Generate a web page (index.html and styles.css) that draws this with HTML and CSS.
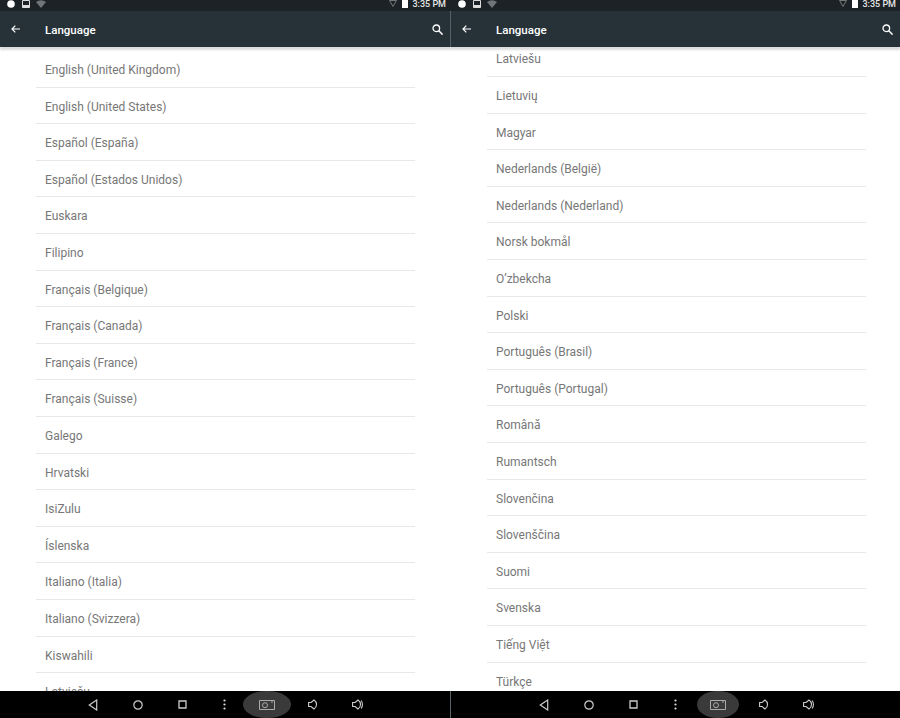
FILE: index.html
```html
<!DOCTYPE html>
<html lang="en">
<head>
    <meta charset="UTF-8">
    <meta name="viewport" content="width=device-width, initial-scale=1.0">
    <title>Language</title>
    <link rel="stylesheet" href="styles.css">
</head>
<body>

<div class="screens">

    <!-- Left screen -->
    <div class="screen screen-left">
        <div class="status-bar">
            <div class="status-left">
                <svg width="8" height="8" viewBox="0 0 8 8"><circle cx="4" cy="4" r="3.800" fill="#fff"/></svg>
                <svg class="status-gap" width="8" height="8" viewBox="0 0 8 8"><path d="M.5.500h7v7h-7z" fill="none" stroke="#ddd"/><path d="M.5 5h7v2.500h-7z" fill="#ddd"/></svg>
                <svg width="10" height="8" viewBox="0 0 10 8"><path d="M0 2Q5-1.500 10 2L5 8z" fill="#6f7678"/></svg>
            </div>
            <div class="status-right">
                <svg width="8" height="7" viewBox="0 0 8 7"><path d="M.5.500h7L4 6.500z" fill="none" stroke="#777"/></svg>
                <svg width="6" height="8" viewBox="0 0 6 8"><path d="M0 0h6v8H0z" fill="#fff"/></svg>
                <span class="clock">3:35 PM</span>
            </div>
        </div>
        <div class="toolbar">
            <svg class="back" width="9" height="8" viewBox="0 0 9 8"><path d="M9 4H1M4.300.600L1 4l3.300 3.400" fill="none" stroke="#fff" stroke-width="1.200"/></svg>
            <span class="toolbar-title">Language</span>
            <svg class="search" width="11" height="11" viewBox="0 0 11 11"><circle cx="4.300" cy="4.300" r="3.300" fill="none" stroke="#fff" stroke-width="1.300"/><path d="M6.800 6.800l3.800 3.800" stroke="#fff" stroke-width="1.500"/></svg>
        </div>
        <div class="list-wrap">
            <ul class="lang-list">
                <li>English (United Kingdom)</li>
                <li>English (United States)</li>
                <li>Español (España)</li>
                <li>Español (Estados Unidos)</li>
                <li>Euskara</li>
                <li>Filipino</li>
                <li>Français (Belgique)</li>
                <li>Français (Canada)</li>
                <li>Français (France)</li>
                <li>Français (Suisse)</li>
                <li>Galego</li>
                <li>Hrvatski</li>
                <li>IsiZulu</li>
                <li>Íslenska</li>
                <li>Italiano (Italia)</li>
                <li>Italiano (Svizzera)</li>
                <li>Kiswahili</li>
                <li>Latviešu</li>
            </ul>
        </div>
        <div class="nav-bar">
            <span class="nav-slot"><svg width="10" height="12" viewBox="0 0 10 12"><path d="M8.700 1v10L1.300 6z" fill="none" stroke="#ccc" stroke-width="1.200"/></svg></span>
            <span class="nav-slot"><svg width="10" height="10" viewBox="0 0 10 10"><circle cx="5" cy="5" r="4.200" fill="none" stroke="#ccc" stroke-width="1.200"/></svg></span>
            <span class="nav-slot"><svg width="9" height="9" viewBox="0 0 9 9"><path d="M1 1h7v7H1z" fill="none" stroke="#ccc" stroke-width="1.300"/></svg></span>
            <span class="nav-slot nav-dots"><svg width="3" height="11" viewBox="0 0 3 11"><circle cx="1.500" cy="1.500" r="1.100" fill="#ddd"/><circle cx="1.500" cy="5.500" r="1.100" fill="#ddd"/><circle cx="1.500" cy="9.500" r="1.100" fill="#ddd"/></svg></span>
            <span class="nav-pill"><svg width="16" height="10" viewBox="0 0 16 10"><path d="M.5.500h15v9H.5z" fill="none" stroke="#aaa"/><circle cx="6" cy="5.200" r="2.500" fill="none" stroke="#aaa"/><path d="M12 2h2" stroke="#aaa"/></svg></span>
            <span class="nav-slot"><svg width="10" height="11" viewBox="0 0 10 11"><path d="M.6 3.500h2.500L6 1q2.500 1.500 2.500 4.500T6 10L3.100 7.500H.6z" fill="none" stroke="#ccc" stroke-width="1.100"/></svg></span>
            <span class="nav-slot"><svg width="12" height="11" viewBox="0 0 12 11"><path d="M.6 3.500h2.500L6 1q2.500 1.500 2.500 4.500T6 10L3.100 7.500H.6z" fill="none" stroke="#ccc" stroke-width="1.100"/><path d="M9.200 1.500Q11.700 5.500 9.200 9.500" fill="none" stroke="#ccc" stroke-width="1.100"/></svg></span>
        </div>
    </div>

    <!-- Right screen -->
    <div class="screen screen-right">
        <div class="status-bar">
            <div class="status-left">
                <svg width="8" height="8" viewBox="0 0 8 8"><circle cx="4" cy="4" r="3.800" fill="#fff"/></svg>
                <svg class="status-gap" width="8" height="8" viewBox="0 0 8 8"><path d="M.5.500h7v7h-7z" fill="none" stroke="#ddd"/><path d="M.5 5h7v2.500h-7z" fill="#ddd"/></svg>
                <svg width="10" height="8" viewBox="0 0 10 8"><path d="M0 2Q5-1.500 10 2L5 8z" fill="#6f7678"/></svg>
            </div>
            <div class="status-right">
                <svg width="8" height="7" viewBox="0 0 8 7"><path d="M.5.500h7L4 6.500z" fill="none" stroke="#777"/></svg>
                <svg width="6" height="8" viewBox="0 0 6 8"><path d="M0 0h6v8H0z" fill="#fff"/></svg>
                <span class="clock">3:35 PM</span>
            </div>
        </div>
        <div class="toolbar">
            <svg class="back" width="9" height="8" viewBox="0 0 9 8"><path d="M9 4H1M4.300.600L1 4l3.300 3.400" fill="none" stroke="#fff" stroke-width="1.200"/></svg>
            <span class="toolbar-title">Language</span>
            <svg class="search" width="11" height="11" viewBox="0 0 11 11"><circle cx="4.300" cy="4.300" r="3.300" fill="none" stroke="#fff" stroke-width="1.300"/><path d="M6.800 6.800l3.800 3.800" stroke="#fff" stroke-width="1.500"/></svg>
        </div>
        <div class="list-wrap">
            <ul class="lang-list">
                <li>Latviešu</li>
                <li>Lietuvių</li>
                <li>Magyar</li>
                <li>Nederlands (België)</li>
                <li>Nederlands (Nederland)</li>
                <li>Norsk bokmål</li>
                <li>O’zbekcha</li>
                <li>Polski</li>
                <li>Português (Brasil)</li>
                <li>Português (Portugal)</li>
                <li>Română</li>
                <li>Rumantsch</li>
                <li>Slovenčina</li>
                <li>Slovenščina</li>
                <li>Suomi</li>
                <li>Svenska</li>
                <li>Tiếng Việt</li>
                <li>Türkçe</li>
            </ul>
        </div>
        <div class="nav-bar">
            <span class="nav-slot"><svg width="10" height="12" viewBox="0 0 10 12"><path d="M8.700 1v10L1.300 6z" fill="none" stroke="#ccc" stroke-width="1.200"/></svg></span>
            <span class="nav-slot"><svg width="10" height="10" viewBox="0 0 10 10"><circle cx="5" cy="5" r="4.200" fill="none" stroke="#ccc" stroke-width="1.200"/></svg></span>
            <span class="nav-slot"><svg width="9" height="9" viewBox="0 0 9 9"><path d="M1 1h7v7H1z" fill="none" stroke="#ccc" stroke-width="1.300"/></svg></span>
            <span class="nav-slot nav-dots"><svg width="3" height="11" viewBox="0 0 3 11"><circle cx="1.500" cy="1.500" r="1.100" fill="#ddd"/><circle cx="1.500" cy="5.500" r="1.100" fill="#ddd"/><circle cx="1.500" cy="9.500" r="1.100" fill="#ddd"/></svg></span>
            <span class="nav-pill"><svg width="16" height="10" viewBox="0 0 16 10"><path d="M.5.500h15v9H.5z" fill="none" stroke="#aaa"/><circle cx="6" cy="5.200" r="2.500" fill="none" stroke="#aaa"/><path d="M12 2h2" stroke="#aaa"/></svg></span>
            <span class="nav-slot"><svg width="10" height="11" viewBox="0 0 10 11"><path d="M.6 3.500h2.500L6 1q2.500 1.500 2.500 4.500T6 10L3.100 7.500H.6z" fill="none" stroke="#ccc" stroke-width="1.100"/></svg></span>
            <span class="nav-slot"><svg width="12" height="11" viewBox="0 0 12 11"><path d="M.6 3.500h2.500L6 1q2.500 1.500 2.500 4.500T6 10L3.100 7.500H.6z" fill="none" stroke="#ccc" stroke-width="1.100"/><path d="M9.200 1.500Q11.700 5.500 9.200 9.500" fill="none" stroke="#ccc" stroke-width="1.100"/></svg></span>
        </div>
    </div>

</div>

</body>
</html>
```

FILE: styles.css
```css
html, body {
    margin: 0;
    padding: 0;
    height: 718px;
    overflow: hidden;
}
body {
    font-family: Roboto, "Liberation Sans", sans-serif;
    background-color: #fff;
}
svg {
    display: block;
}
.screens {
    display: grid;
    grid-template-columns: 451px 449px;
    height: 718px;
}
.screen {
    display: flex;
    flex-direction: column;
    min-width: 0;
    height: 718px;
}
/* Status bar */
.status-bar {
    display: flex;
    justify-content: space-between;
    height: 11px;
    padding: 0 4px 0 7px;
    background-color: #1c2225;
    flex: none;
}
.screen-left .status-bar {
    padding-right: 5px;
}
.status-left,
.status-right {
    display: flex;
    align-items: flex-start;
    gap: 6px;
}
.status-right {
    gap: 5px;
}
.status-gap {
    margin-left: 1px;
}
.clock {
    margin-left: -1px;
    font-size: 9px;
    font-weight: 500;
    line-height: 9px;
    color: #e6e6e6;
}
/* Toolbar */
.toolbar {
    display: flex;
    align-items: center;
    box-sizing: border-box;
    height: 36px;
    padding: 0 7px 0 11px;
    background-color: #263238;
    box-shadow: 0 3px 2px rgba(0, 0, 0, 0.14);
    position: relative;
    z-index: 1;
    flex: none;
}
.toolbar-title {
    margin-left: 25px;
    padding-top: 2px;
    font-size: 11.500px;
    font-weight: 500;
    color: #fff;
}
.search {
    margin-left: auto;
}
.screen-left .toolbar,
.screen-left .nav-bar {
    box-sizing: border-box;
    border-right: 1px solid #59646a;
}
/* List */
.list-wrap {
    flex: 1;
    overflow: hidden;
}
.lang-list {
    list-style-type: none;
    margin: 4px 36px 0 36px;
    padding: 0;
}
.screen-right .lang-list {
    margin: -6.600px 34px 0 36px;
}
.lang-list li {
    box-sizing: border-box;
    height: 36.600px;
    line-height: 38px;
    padding-left: 9px;
    border-bottom: 1px solid #e8e8e8;
    font-size: 12px;
    color: #777;
    white-space: nowrap;
}
/* Navigation */
.nav-bar {
    display: flex;
    align-items: center;
    height: 27px;
    padding-left: 70px;
    background-color: #000;
    flex: none;
}
.nav-slot {
    display: flex;
    justify-content: center;
    align-items: center;
    width: 45px;
    height: 27px;
}
.nav-dots {
    width: 38px;
}
.nav-pill {
    display: flex;
    justify-content: center;
    align-items: center;
    width: 48px;
    height: 27px;
    margin-right: -1px;
    border-radius: 24px / 14px;
    background-color: #3a3a3a;
}
.screen-right .nav-pill {
    width: 42px;
    margin: 0 2px 0 3px;
    border-radius: 21px / 14px;
}
```
